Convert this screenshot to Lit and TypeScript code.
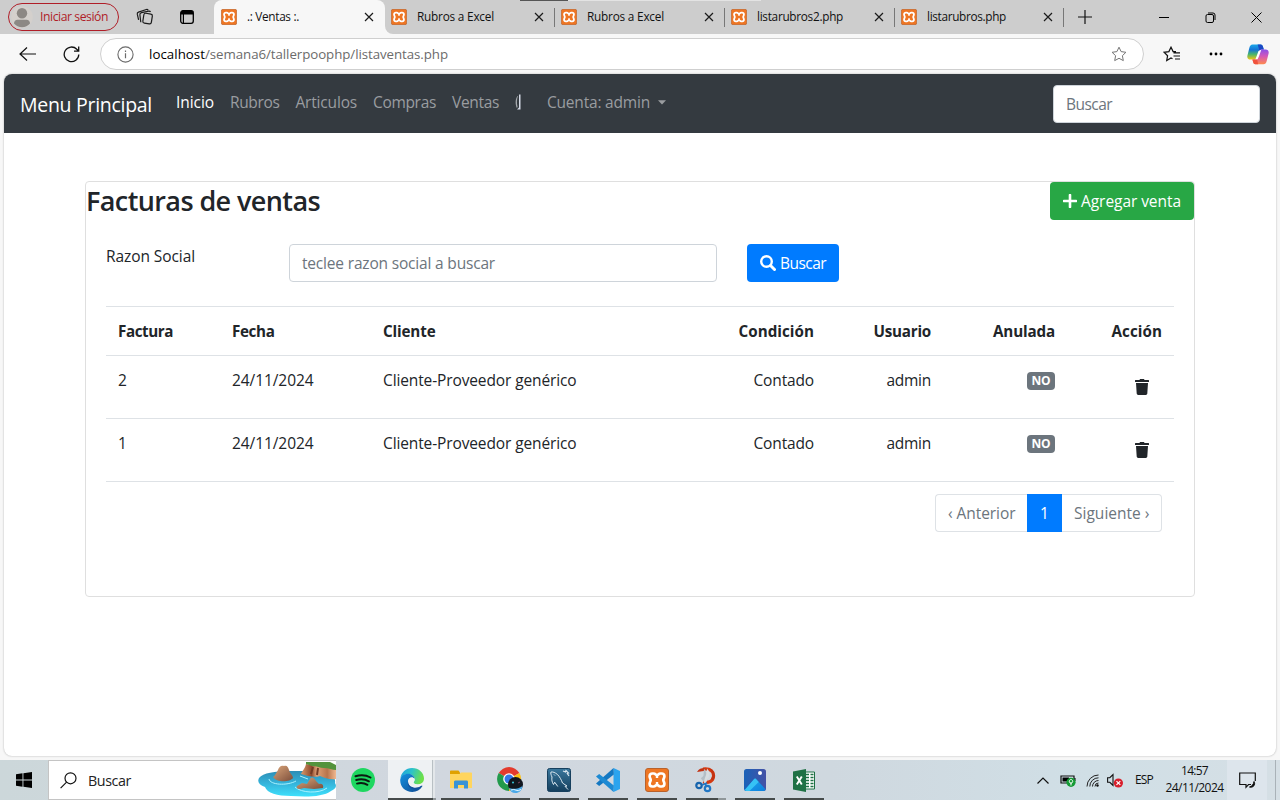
import { LitElement, html, css } from "lit";
import { customElement, property } from "lit/decorators.js";

/** Text run whose tracking is adjusted so that it fills a given width. */
@customElement("fit-text")
class FitText extends LitElement {
  @property({ type: Number }) w = 0;
  @property() text = "";
  static styles = css`
    :host { display: inline-block; white-space: pre; flex: none; }
    .run { display: inline-block; }
  `;
  render() {
    return html`<span class="run">${this.text}</span>`;
  }
  updated() {
    const run = this.renderRoot.querySelector(".run") as HTMLElement;
    run.style.letterSpacing = "0px";
    const natural = run.getBoundingClientRect().width;
    const gap = (this.w - natural) / Math.max(1, this.text.length);
    run.style.letterSpacing = gap.toFixed(3) + "px";
    this.style.width = this.w + "px";
  }
}

const fit = (text: string, w: number) => html`<fit-text .text=${text} .w=${w}></fit-text>`;

const xampp = (size: number) => html`<svg width=${size} height=${size} viewBox="0 0 24 24">
  <rect x="0.5" y="0.5" width="23" height="23" rx="2.5" fill="#ee7623" stroke="#b9622c"/>
  <path d="M7.300 5.500h1.400c1.700 0 2.200 1.700 3.300 1.700s1.600-1.700 3.300-1.700h1.400a2.700 2.700 0 0 1 2.700 2.700c0 1.700-1.100 2.400-1.100 3.800s1.100 2.100 1.100 3.800a2.700 2.700 0 0 1-2.700 2.700h-1.400c-1.700 0-2.200-1.700-3.300-1.700s-1.600 1.700-3.300 1.700H7.300a2.700 2.700 0 0 1-2.700-2.700c0-1.700 1.100-2.400 1.100-3.800s-1.100-2.100-1.100-3.800a2.700 2.700 0 0 1 2.700-2.700z" fill="none" stroke="#fff" stroke-width="2.700"/>
  <path d="M12 7.500v2.600M12 13.900v2.600" stroke="#fff" stroke-width="2.400"/>
</svg>`;

const closeIcon = html`<svg width="10" height="10" viewBox="0 0 10 10"><path d="M1 1l8 8M9 1l-8 8" stroke="#1b1b1b" stroke-width="1.200" fill="none"/></svg>`;

const profileIcon = html`<svg width="22" height="22" viewBox="0 0 22 22">
  <circle cx="11" cy="11" r="10.800" fill="#d4d0cc"/><circle cx="11" cy="7.200" r="5.200" fill="#8c8884"/>
  <path d="M3 17.500c0-2.200 1.500-3.700 3.500-3.700h9c2 0 3.500 1.500 3.500 3.700-2 2.400-4.800 3.800-8 3.800s-6-1.400-8-3.800z" fill="#8c8884"/></svg>`;

const workspacesIcon = html`<svg width="18" height="18" viewBox="0 0 18 18" fill="none" stroke="#1b1b1b" stroke-width="1.200">
  <rect x="7.300" y="5.600" width="8.600" height="10" rx="1.800" transform="rotate(9 11.600 10.600)"/>
  <path d="M4.800 14.300l-.9-7.500c-.1-1.100.5-1.900 1.600-2.200l7.300-1.500c.8-.1 1.400.2 1.700.9"/>
  <path d="M2.600 11.800L1.300 6.200c-.2-1 .3-1.800 1.200-2.100l7.800-2.600c.8-.2 1.500 0 1.900.7"/></svg>`;

const tabActionsIcon = html`<svg width="14" height="14" viewBox="0 0 14 14"><rect x=".7" y=".7" width="12.600" height="12.600" rx="2.200" fill="none" stroke="#000" stroke-width="1.300"/><path d="M.8 4V3A2.200 2.200 0 0 1 3 .8h8A2.200 2.200 0 0 1 13.200 3v1.500H4v8.700H2.800V4.500H.8z" fill="#000"/></svg>`;

const starPath = "M8 1.200l2.100 4.400 4.800.7-3.500 3.400.9 4.900L8 12.300l-4.300 2.300.9-4.900L1.100 6.300l4.800-.7z";

const copilotIcon = html`<svg width="22" height="21" viewBox="0 0 22 21">
  <defs>
    <linearGradient id="ca" x1="0" y1="0" x2="0" y2="1"><stop offset="0" stop-color="#1aa7e8"/><stop offset=".35" stop-color="#1574d6"/><stop offset=".65" stop-color="#49b56d"/><stop offset="1" stop-color="#f0c514"/></linearGradient>
    <linearGradient id="cb" x1="0" y1="0" x2="0" y2="1"><stop offset="0" stop-color="#8b4fe8"/><stop offset=".45" stop-color="#d457b8"/><stop offset="1" stop-color="#ff8a4d"/></linearGradient>
  </defs>
  <path d="M5.500.6h8.200c1.200 0 1.800.9 2.200 2l.9 3h-1.600c-1.300 0-2 .6-2.400 1.800l-2.100 6.400c-.4 1.100-1 1.700-2.200 1.700H3.300C1.200 15.500-.1 14 .4 11.700L2.300 4C2.900 1.800 3.800.6 5.500.6z" fill="url(#ca)"/>
  <path d="M10.600.6h3.100c1.200 0 1.800.9 2.200 2l.9 3h-1.600c-1.300 0-2 .6-2.400 1.800z" fill="#1b48c4"/>
  <path d="M16.500 20.200H8.300c-1.200 0-1.700-.9-2.100-2l-.8-2.700h2c1.300 0 2-.6 2.400-1.800l2-6.200c.4-1.200 1-1.900 2.300-1.900h4.600c2.100 0 3.400 1.500 2.900 3.800l-1.900 7.500c-.6 2.100-1.500 3.300-3.200 3.300z" fill="url(#cb)"/>
  <path d="M11.200 20.200H8.300c-1.200 0-1.700-.9-2.100-2l-.8-2.700h2c1.300 0 2-.6 2.400-1.800z" fill="#f0523d"/>
  <path d="M9.500 12.500l2-5.600 2.800-1.100-2.300 6.500-1.400 3-2.300.2z" fill="#fff"/></svg>`;

const trashIcon = html`<svg width="14" height="16" viewBox="0 0 14 16" fill="#212529"><path d="M0 1.500C0 1.200.2 1 .5 1h3.800L4.800.4c.2-.3.4-.4.7-.4h3c.3 0 .5.100.7.400L9.700 1h3.800c.3 0 .5.200.5.500V3H0z"/><path d="M1 4h12l-.7 10.600c0 .8-.7 1.400-1.500 1.400H3.200c-.8 0-1.400-.6-1.500-1.400z"/></svg>`;

const beach = html`<svg width="78" height="36" viewBox="0 0 78 36">
  <defs>
    <linearGradient id="sea" x1="0" y1="0" x2="0" y2="1"><stop offset="0" stop-color="#2d8db5"/><stop offset=".5" stop-color="#35b5dc"/><stop offset="1" stop-color="#3fe0fb"/></linearGradient>
    <linearGradient id="rk" x1="0" y1="0" x2="1" y2="1"><stop offset="0" stop-color="#dca67a"/><stop offset="1" stop-color="#7c4e3b"/></linearGradient>
    <linearGradient id="cl" x1="0" y1="0" x2="1" y2="0"><stop offset="0" stop-color="#d99a6c"/><stop offset=".3" stop-color="#8f4a2c"/><stop offset=".45" stop-color="#e0a277"/><stop offset=".75" stop-color="#b8744c"/><stop offset="1" stop-color="#f0b890"/></linearGradient>
  </defs>
  <path d="M1 16c4-5 16-7 30-7h35c8 2 12 7 11 12 2 3 1 6-4 8-8 6-24 6-40 5-14 0-24-3-26-9C1 23-1 20 1 16z" fill="url(#sea)"/>
  <path d="M11 17c1 6 18 7 27 2M37 25c6 6 24 7 32 1M42 14l8 3" stroke="#a9f2ff" stroke-width="1" fill="none"/>
  <path d="M15 15c2-1 3-4 5-7 1-3 3-5 6-4 3-1 4 1 5 4 1 4 4 5 4 8-3 4-16 5-20-1z" fill="url(#rk)"/>
  <path d="M48 2l30 5v10c-6 1-11-1-16-3-6 2-12 0-19-2 1-3 4-5 5-10z" fill="url(#cl)"/>
  <path d="M48 0h24l6 3v5c-4 0-7-2-12-2-4 0-7-2-12-2l-6-2z" fill="#54933c"/>
  <path d="M55 5l-2 7M60 6l-1 7" stroke="#733b24" stroke-width="2"/>
  <path d="M39 24l5-3 5 1 3-5c2-3 4-1 6 2l3 3c3-1 5 1 4 4l-9 1-10-1-4 1c-3 0-4-1-3-3z" fill="url(#rk)"/>
</svg>`;

const apps: Record<string, unknown> = {
  spotify: html`<svg width="24" height="24" viewBox="0 0 24 24"><circle cx="12" cy="12" r="12" fill="#1ed760"/><path d="M4.500 8.200c5-1.500 11-1 15 1.300M5.200 12c4.500-1.200 9-.8 12.700 1.300M6 15.600c3.700-.9 7.400-.6 10.400 1.200" fill="none" stroke="#0b1a10" stroke-linecap="round" stroke-width="2"/></svg>`,
  edge: html`<svg width="24" height="24" viewBox="0 0 24 24"><defs>
    <linearGradient id="e1" x1="0" y1="0" x2="1" y2=".3"><stop offset="0" stop-color="#1c9de0"/><stop offset=".5" stop-color="#2cc3c9"/><stop offset="1" stop-color="#6ce04a"/></linearGradient>
    <linearGradient id="e2" x1="0" y1="0" x2="1" y2="1"><stop offset="0" stop-color="#1390df"/><stop offset="1" stop-color="#104a91"/></linearGradient></defs>
    <path d="M.3 11C.9 4.500 6 0 12 0c7 0 12 5 12 10.500 0 3.600-2.700 5.900-6.200 5.900-2.700 0-4.300-1-4.300-1.900 0-.6 1.100-1.200 1.100-3.100C14.600 8.500 12 6 8.500 6 4 6 .8 8.700.3 11z" fill="url(#e1)"/>
    <path d="M.2 12.500C.2 8.500 4 5.800 8.200 5.800c3.700 0 6.400 2.600 6.400 5.200-.6-1-1.600-1.500-2.800-1.500-2.600 0-3.700 2-3.700 4.200 0 3.800 3.600 6 7.400 6 2.400 0 4.300-.9 5.800-2 .8-.4 1.300.2.900.9C20.200 21.900 16.500 24 12.400 24 5.400 24 .2 19 .2 12.500z" fill="url(#e2)"/>
    <path d="M8.100 13.700c0-2.200 1.200-4.200 3.700-4.200 1.300 0 2.300.6 2.800 1.500.1 2.200-1.100 2.900-1.100 3.500 0 .9 1.600 1.900 4.300 1.900 1.500 0 2.800-.4 3.900-1.200l-.4 2.500c-1.500 1.100-3.400 2-5.800 2-3.800 0-7.400-2.200-7.400-6z" fill="#eef1f3"/>
    <path d="M8.100 13.700c0 3.800 3.600 6 7.400 6 2.400 0 4.300-.9 5.800-2l-1 2.300c-3 2-8 2-11-1-1.500-1.500-1.800-3.500-1.200-5.300z" fill="#134f9c"/></svg>`,
  explorer: html`<svg width="22" height="20" viewBox="0 0 22 20"><path d="M0 1.500C0 .8.500.5 1 .5h7.500l1.500 2v4H0z" fill="#e0a100"/><path d="M0 4h9.500L11 2.500h10c.6 0 1 .4 1 1V18H0z" fill="#ffd55e"/><path d="M4 18.500V12c0-1 .6-1.500 1.500-1.500h11c1 0 1.500.6 1.500 1.500v6.500h-4V15H8v3.500z" fill="#3a93d6"/></svg>`,
  chrome: html`<svg width="26" height="26" viewBox="0 0 26 26"><path d="M12 12L1.700 6A12 12 0 0 1 22.400 6z" fill="#e33b2e"/><path d="M12 12L22.400 6A12 12 0 0 1 12 24z" fill="#fbc116"/><path d="M12 12v12A12 12 0 0 1 1.700 6z" fill="#229a4c"/><circle cx="12" cy="12" r="5.800" fill="#fff"/><circle cx="12" cy="12" r="4.500" fill="#3377e8"/><circle cx="18.500" cy="17.500" r="7.500" fill="#11161f"/><path d="M12 21c3 1.500 10 1 13.500-2-.5 4.500-3.500 7-7 7s-5.500-2-6.500-5z" fill="#4aa9e8"/><path d="M14 23q3-1.200 5 .2t5-.8" stroke="#dff3ff" fill="none"/><circle cx="16" cy="15.500" r="1" fill="#38c8df"/><path d="M21 16l2-1" stroke="#7f4464"/></svg>`,
  mysql: html`<svg width="24" height="24" viewBox="0 0 24 24"><defs><linearGradient id="my" x1="0" y1="0" x2="0" y2="1"><stop offset="0" stop-color="#39779d"/><stop offset="1" stop-color="#143e5c"/></linearGradient></defs><rect x=".5" y=".5" width="23" height="23" rx="2" fill="url(#my)" stroke="#17405e"/><path d="M6.500 16.500C5 14 4.500 12 5 9 4 7 3.500 5 4 4c2-.3 4 .5 6.500 2.500 2 2 4 5.500 5 8.500l4.500 3-2 .3 3 3.200M6.500 16.500l1.200-2.300 3.100 4.300M7 6.500l1 1" fill="none" stroke="#dce8f0" stroke-width="1"/><path d="M16 3l2.500 1 .5-1.500L21.500 5l-1.200.5L22 8" fill="none" stroke="#dce8f0" stroke-width="1.200"/></svg>`,
  vscode: html`<svg width="24" height="24" viewBox="0 0 24 24"><path d="M17.500 0L24 3v18l-6.500 3z" fill="#2ba4ee"/><path d="M17.500 0l.3 6.500L3.200 18 0 15.600z" fill="#1478c2"/><path d="M0 8.400L3.200 6l14.600 11.500-.3 6.500z" fill="#1d8ad3"/></svg>`,
  xampp: xampp(24),
  snip: html`<svg width="22" height="26" viewBox="0 0 22 26"><path d="M8 2c8-1 11 3 10.500 7.500C18 14 14 16.500 8 15" fill="none" stroke="#d43a12" stroke-width="3.200"/><path d="M2 5C4 1.500 7 .8 10 1l-1 3C6 4 4.500 5 2 5zM14 1c5.500 2 7.500 8 4 12.500l-2-1.500c2.500-3.500 2-7-2-11z" fill="#c23212"/><path d="M9 1.500c2 3 4 7 3.500 11l-2.500 4-4-5c0-1.500 2-1 2.500-3z" fill="#b4bec6"/><path d="M12 1.500c3 3 3 6 1 10l-3 6-1-3c1-5 3-7 3-13z" fill="#d8dde1"/><circle cx="4" cy="18.500" r="2.700" fill="none" stroke="#1764ad" stroke-width="2.200"/><circle cx="12.500" cy="21.500" r="2.700" fill="none" stroke="#2176c4" stroke-width="2.200"/><path d="M7 18l5-2M11 19l-.5-3" stroke="#2176c4" stroke-width="1.800"/></svg>`,
  photos: html`<svg width="24" height="24" viewBox="0 0 24 24"><defs><linearGradient id="ph" x1="0" y1="0" x2="1" y2="1"><stop offset="0" stop-color="#20a9ee"/><stop offset="1" stop-color="#0d80dd"/></linearGradient><linearGradient id="pg" x1="0" y1="0" x2="1" y2="0"><stop offset="0" stop-color="#1a62b8"/><stop offset="1" stop-color="#4552a6"/></linearGradient></defs><rect x="1" y="1" width="22" height="22" rx="2.500" fill="url(#pg)"/><path d="M1.700 22L11 11.200c.7-.8 1.500-.8 2.200 0L22.300 21c.5 1.100-.7 2-2 2H3.500c-.8 0-1.400-.3-1.800-1z" fill="url(#ph)"/><path d="M1.700 22L11 11.200c.7-.8 1.500-.8 2.200 0l2.500 2.800L6.500 23h-3z" fill="#36c3f5"/><circle cx="17" cy="5" r="2" fill="#fff"/></svg>`,
  excel: html`<svg width="22" height="23" viewBox="0 0 22 23"><path d="M11 3h10.500v17H11z" fill="#fff" stroke="#1f7145"/><path d="M13 5.500h3M17.500 5.500h3M13 8.500h3M17.500 8.500h3M13 11.500h3M17.500 11.500h3M13 14.500h3M17.500 14.500h3M13 17.500h3M17.500 17.500h3" stroke="#1f7145" stroke-width="1.700"/><path d="M0 2.500L13 0v23L0 20.500z" fill="#1f7145"/><path d="M3.800 7.500l5 8M8.800 7.500l-5 8" stroke="#fff" stroke-width="1.900"/></svg>`,
};

@customElement("browser-chrome")
class BrowserChrome extends LitElement {
  static styles = css`
    :host { display: block; font-family: "Open Sans", "Noto Sans", sans-serif; color: #111; }
    svg { display: block; flex: none; }
    .strip { height: 34px; background: #cdcdcd; display: flex; box-sizing: border-box; position: relative; }
    .marks { position: absolute; z-index: 1; left: 520px; top: 0; width: 241px; height: 1px; background: linear-gradient(90deg, #555 48px, #e3e3e3 48px); }
    .left { width: 214px; display: flex; align-items: center; box-sizing: border-box; padding-left: 8px; border-radius: 0 0 8px 0; background: #cdcdcd; }
    .profile { width: 111px; height: 28px; border: 1.300px solid #b01e28; border-radius: 14px; box-sizing: border-box; display: flex; align-items: center; gap: 7px; padding-left: 2px; color: #b01e28; font-size: 12.200px; }
    .profile fit-text { margin-bottom: 1px; }
    .ws { margin-left: 17px; }
    .ta { margin-left: 26px; }
    .tabs { display: flex; background: linear-gradient(#cdcdcd 12px, #f7f7f7 12px); }
    .tab { width: 170px; height: 34px; box-sizing: border-box; display: flex; align-items: center; padding: 0 11px 0 6px; background: #cdcdcd; font-size: 11.800px; line-height: 16px; position: relative; }
    .tab.first { border-radius: 0 0 0 8px; }
    .tab.active { width: 171px; padding-left: 7px; background: #f7f7f7; border-radius: 8px 8px 0 0; }
    .tab .name { margin: 0 0 2px 10px; flex: 1; display: flex; }
    .tab.sep::after { content: ""; position: absolute; right: 0; top: 8px; width: 1px; height: 19px; background: #777; }
    .tab.last { width: 169px; }
    .cap { flex: 1; display: flex; align-items: center; background: #cdcdcd; }
    .plus { margin-left: 14px; } .min { margin-left: 67px; } .max { margin-left: 36px; } .x { margin-left: 35px; }
    .bar { height: 40px; background: #f7f7f7; display: flex; align-items: center; }
    .back { margin-left: 19px; } .reload { margin-left: 27px; }
    .address { margin-left: 20px; width: 1044px; height: 32px; box-sizing: border-box; border: 1px solid #cfcfcf; border-radius: 16px; background: #fff; display: flex; align-items: center; padding: 0 16px; font-size: 13.300px; }
    .url { margin-left: 15px; flex: 1; display: flex; color: #6b6b6b; }
    .host { color: #000; }
    .fav { margin-left: 19px; } .dots { margin-left: 29px; } .cop { margin-left: 24px; }
  `;
  private tabs: [string, number, string][] = [
    [".: Ventas :.", 52, "active"], ["Rubros a Excel", 77, "first sep"], ["Rubros a Excel", 77, "sep"], ["listarubros2.php", 86, "sep"], ["listarubros.php", 79, "sep last"],
  ];
  render() {
    return html`
      <div class="strip">
        <div class="marks"></div>
        <div class="left">
          <div class="profile">${profileIcon}${fit("Iniciar sesión", 68)}</div>
          <div class="ws">${workspacesIcon}</div><div class="ta">${tabActionsIcon}</div>
        </div>
        <div class="tabs">${this.tabs.map(([n, w, c]) => html`<div class="tab ${c}">${xampp(16)}<span class="name">${fit(n, w)}</span>${closeIcon}</div>`)}</div>
        <div class="cap">
          <svg class="plus" width="14" height="14" viewBox="0 0 14 14"><path d="M7 0v14M0 7h14" stroke="#111" stroke-width="1.200"/></svg>
          <svg class="min" width="10" height="10" viewBox="0 0 10 10"><path d="M0 5.500h10" stroke="#000"/></svg>
          <svg class="max" width="11" height="11" viewBox="0 0 11 11" fill="none" stroke="#000"><rect x="1" y="2.500" width="7.500" height="8" rx="1.500"/><path d="M3 1h5a2 2 0 0 1 2 2v5"/></svg>
          <svg class="x" width="11" height="11" viewBox="0 0 11 11"><path d="M.5.5l10 10M10.500.5l-10 10" stroke="#000"/></svg>
        </div>
      </div>
      <div class="bar">
        <svg class="back" width="17" height="14" viewBox="0 0 17 14" fill="none" stroke="#111" stroke-width="1.200"><path d="M8 .5L1 7l7 6.500M1 7h16"/></svg>
        <svg class="reload" width="17" height="17" viewBox="0 0 17 17" fill="none" stroke="#111" stroke-width="1.300"><path d="M15.800 8.500a7.300 7.300 0 1 1-2-5.200L15.500 5M15.700.5V5.200H11"/></svg>
        <div class="address">
          <svg width="17" height="17" viewBox="0 0 17 17"><circle cx="8.500" cy="8.500" r="7.600" fill="none" stroke="#6b6b6b" stroke-width="1.100"/><path d="M8.500 7.200v5M8.500 4.500v1.400" stroke="#6b6b6b" stroke-width="1.200"/></svg>
          <div class="url"><span class="host">${fit("localhost", 56)}</span>${fit("/semana6/tallerpoophp/listaventas.php", 243)}</div>
          <svg width="16" height="16" viewBox="0 0 16 16"><path d=${starPath} fill="none" stroke="#757575" stroke-width="1"/></svg>
        </div>
        <svg class="fav" width="17" height="16" viewBox="0 0 17 16" fill="none" stroke="#111" stroke-width="1.200"><path d="M9.500 12.800L8 12l-4.300 2.600.9-4.900L1.100 6.300l4.800-.7L8 1.200l2.100 4.400H13M10.500 6.800H17M10.500 10H17M12 13h5"/></svg>
        <svg class="dots" width="14" height="4" viewBox="0 0 14 4"><circle cx="2" cy="2" r="1.400"/><circle cx="7" cy="2" r="1.400"/><circle cx="12" cy="2" r="1.400"/></svg>
        <div class="cop">${copilotIcon}</div>
      </div>`;
  }
}

@customElement("sales-page")
class SalesPage extends LitElement {
  static styles = css`
    :host { display: block; height: 682px; margin: 0 4px; background: #fff; border-radius: 8px; overflow: hidden; box-shadow: 0 0 2px #aaa; font-family: "Open Sans", "Noto Sans", sans-serif; font-size: 15.500px; line-height: 24px; color: #212529; }
    svg { display: block; flex: none; }
    nav { height: 59px; background: #343a40; display: flex; align-items: center; padding: 0 16px; box-sizing: border-box; color: #9a9da0; }
    .brand { font-size: 19.500px; color: #fff; margin: 3px 24px 0 0; }
    .links { display: flex; align-items: center; gap: 16px; flex: 1; margin-bottom: 3px; }
    .on { color: #fff; }
    .moon { margin-right: 10px; }
    .user { display: flex; align-items: center; gap: 8px; }
    .field { box-sizing: border-box; height: 38px; border: 1px solid #ced4da; border-radius: 4px; background: #fff; padding: 6px 12px; color: #6c757d; display: flex; align-items: center; }
    .search { width: 207px; margin-top: 1px; }
    .card { margin: 48px 81px 0; height: 416px; box-sizing: border-box; border: 1px solid #dfdfdf; border-radius: 4px; }
    .head { display: flex; justify-content: space-between; height: 38px; }
    h3 { margin: 0; font-size: 27px; font-weight: 600; line-height: 37px; }
    .btn { box-sizing: border-box; height: 38px; border-radius: 4px; color: #fff; display: flex; align-items: center; }
    .green { background: #28a745; width: 144px; gap: 4px; padding-left: 13px; }
    .blue { background: #007bff; width: 92px; margin-left: 30px; gap: 4px; padding-left: 13px; }
    .body { padding: 24px 20px 0; }
    .filter { display: flex; height: 38px; margin-bottom: 24px; }
    .filter .lab { width: 183px; }
    .filter .field { width: 428px; }
    .row { display: grid; grid-template-columns: 114px 151px 300px 155px 117px 124px 107px; border-top: 1px solid #dee2e6; height: 63px; box-sizing: border-box; padding-top: 12px; }
    .row > div { padding: 0 12px; height: 24px; }
    .row > div:nth-child(n + 4) { display: flex; justify-content: flex-end; }
    .hd { height: 49px; font-weight: 700; font-size: 15.200px; }
    .badge { background: #6c757d; color: #fff; font-size: 12px; font-weight: 700; line-height: 18px; height: 18px; border-radius: 4px; width: 28px; box-sizing: border-box; padding-left: 4.500px; margin-top: 4px; }
    .trash { margin: 11px 13px 0 0; }
    .end { border-top: 1px solid #dee2e6; padding: 12px 12px 0; display: flex; justify-content: flex-end; }
    .pg { box-sizing: border-box; height: 38px; border: 1px solid #dee2e6; color: #6c757d; display: flex; align-items: center; padding-left: 12px; }
    .prev { width: 92px; border-right: 0; border-radius: 4px 0 0 4px; }
    .cur { width: 35px; background: #007bff; border-color: #007bff; color: #fff; }
    .next { width: 100px; border-left: 0; border-radius: 0 4px 4px 0; }
  `;
  private rows = ["2", "1"];
  render() {
    return html`
      <nav>
        <div class="brand">${fit("Menu Principal", 132)}</div>
        <div class="links">
          <span class="on">${fit("Inicio", 38)}</span>${fit("Rubros", 49.500)}${fit("Articulos", 61.500)}${fit("Compras", 63)}${fit("Ventas", 47)}
          <svg class="moon" width="6" height="16" viewBox="0 0 6 16"><path d="M4 0.500h1.500v15H2l2-2z" fill="#d5dae6"/><path d="M2.500 2C.2 5 .2 10 1.800 14l.8-1C1.600 9 1.800 5 3 2z" fill="#a4a8ac"/></svg>
          <span class="user">${fit("Cuenta: admin", 103)}<svg width="8" height="5" viewBox="0 0 8 5"><path d="M0 .3h8L4 4.500z" fill="#9a9da0"/></svg></span>
        </div>
        <div class="field search">${fit("Buscar", 46)}</div>
      </nav>
      <div class="card">
        <div class="head">
          <h3>${fit("Facturas de ventas", 234)}</h3>
          <div class="btn green"><svg width="14" height="14" viewBox="0 0 14 14"><path d="M7 1v12M1 7h12" stroke="#fff" stroke-width="2.600" stroke-linecap="round"/></svg>${fit("Agregar venta", 100)}</div>
        </div>
        <div class="body">
          <div class="filter">
            <div class="lab">${fit("Razon Social", 89)}</div>
            <div class="field">${fit("teclee razon social a buscar", 193)}</div>
            <div class="btn blue"><svg width="16" height="16" viewBox="0 0 16 16" fill="none" stroke="#fff"><circle cx="6.500" cy="6.500" r="5.300" stroke-width="2.400"/><path d="M10.500 10.500l4 4" stroke-width="3" stroke-linecap="round"/></svg>${fit("Buscar", 46)}</div>
          </div>
          <div class="row hd">
            <div>${fit("Factura", 55)}</div><div>${fit("Fecha", 42.500)}</div><div>${fit("Cliente", 52.500)}</div><div>${fit("Condición", 75.500)}</div><div>${fit("Usuario", 57.500)}</div><div>${fit("Anulada", 62)}</div><div>${fit("Acción", 50.500)}</div>
          </div>
          ${this.rows.map((n) => html`<div class="row">
            <div>${fit(n, 9)}</div><div>${fit("24/11/2024", 81.500)}</div><div>${fit("Cliente-Proveedor genérico", 193.500)}</div><div>${fit("Contado", 60.500)}</div><div>${fit("admin", 44.500)}</div>
            <div><span class="badge">${fit("NO", 19)}</span></div><div><span class="trash">${trashIcon}</span></div>
          </div>`)}
          <div class="end">
            <div class="pg prev">${fit("‹ Anterior", 67.500)}</div><div class="pg cur">${fit("1", 9)}</div><div class="pg next">${fit("Siguiente ›", 75.500)}</div>
          </div>
        </div>
      </div>`;
  }
}

@customElement("task-bar")
class TaskBar extends LitElement {
  static styles = css`
    :host { display: flex; height: 40px; background: linear-gradient(90deg, #ccd7da, #d1d7df 35%, #cfd8df 65%, #d0dfe6 85%, #d5dfe5); font-family: "Open Sans", "Noto Sans", sans-serif; color: #111; }
    svg { display: block; flex: none; }
    .start { width: 48px; display: flex; align-items: center; justify-content: center; }
    .find { width: 288px; box-sizing: border-box; border: 1px solid #c4c4c4; border-right: 0; background: #fff; display: flex; align-items: center; padding-left: 11px; font-size: 14.300px; color: #222; overflow: hidden; }
    .find .lab { margin-left: 11px; flex: 1; }
    .apps { display: flex; padding-left: 3px; flex: 1; }
    .app { width: 49px; box-sizing: border-box; display: flex; align-items: center; justify-content: center; position: relative; padding-right: 1px; }
    .run::after { content: ""; position: absolute; left: 4px; right: 5px; bottom: 0; height: 2px; background: #464b4b; }
    .app.focus { background: linear-gradient(90deg, #eef1f3 44px, #b9c0c4 44px, #b9c0c4 45px, #e3e7ea 45px, #e3e7ea 47px, transparent 47px); }
    .app.focus::after { left: 0; right: 1px; background: linear-gradient(90deg, #464b4b 45px, #8f9699 45px); }
    .app.snip::after { background: linear-gradient(90deg, #464b4b 32px, #8f9699 32px); }
    .tray { display: flex; align-items: center; }
    .bat { margin-left: 11px; } .wifi { margin-left: 10px; } .vol { margin-left: 8px; }
    .lang { margin: 0 0 2px 12px; font-size: 12px; }
    .clock { width: 59px; margin: 0 0 2px 12px; font-size: 12px; display: flex; flex-direction: column; align-items: center; line-height: 17.500px; }
    .note { width: 40px; margin-left: 3px; height: 40px; background: #dde5ec; display: flex; align-items: center; justify-content: center; }
    .desk { width: 4px; height: 40px; margin-left: 8px; border-left: 1px solid #a9b2b8; }
  `;
  render() {
    return html`
      <div class="start"><svg width="16" height="16" viewBox="0 0 16 16"><path d="M0 2.200L6.500 1.300v6.200H0zM7.400 1.200L16 0v7.500H7.400zM0 8.500h6.500v6.200L0 13.800zM7.400 8.500H16V16l-8.600-1.200z"/></svg></div>
      <div class="find">
        <svg width="17" height="17" viewBox="0 0 17 17" fill="none" stroke="#111" stroke-width="1.200"><circle cx="10.500" cy="6.300" r="5.500"/><path d="M6.600 10.200L.6 16.200"/></svg>
        <div class="lab">${fit("Buscar", 43)}</div>${beach}
      </div>
      <div class="apps">${Object.keys(apps).map((k) => html`<div class="app ${k === "spotify" ? "" : "run"} ${k === "edge" ? "focus" : k}">${apps[k]}</div>`)}</div>
      <div class="tray">
        <svg width="12" height="7" viewBox="0 0 12 7"><path d="M.5 6.500L6 1l5.500 5.500" fill="none" stroke="#111" stroke-width="1.200"/></svg>
        <svg class="bat" width="16" height="14" viewBox="0 0 16 14"><path d="M1 3h13v7H1z" fill="none" stroke="#111" stroke-width="1.200"/><path d="M2.500 4.500H9v4H2.500z"/><path d="M14.500 5h1v3h-1z"/><circle cx="11" cy="9.300" r="4.600" fill="#159b35"/><path d="M11 12.500V9M9.300 8.500C9.300 7 11 6.300 11 6.300s1.700.7 1.700 2.200-1.700 1.800-1.700 1.800-1.700-.3-1.700-1.800z" fill="none" stroke="#fff"/></svg>
        <svg class="wifi" width="13" height="13" viewBox="0 0 13 13" fill="none" stroke="#222"><path d="M1 12.500A11.500 11.500 0 0 1 12.500 1M3.800 12.500a8.700 8.700 0 0 1 8.700-8.700M6.500 12.500a6 6 0 0 1 6-6M9 12.500A3.500 3.500 0 0 1 12.500 9"/><circle cx="11.500" cy="11.500" r="1.200" fill="#111" stroke="none"/></svg>
        <svg class="vol" width="16" height="15" viewBox="0 0 16 15"><path d="M.6 4.700h2.200L6 1.500v11L2.800 9.300H.6z" fill="none" stroke="#111" stroke-width="1.100"/><circle cx="11.400" cy="10" r="4.600" fill="#d81f2c"/><path d="M9.500 8.100l3.800 3.800M13.300 8.100l-3.800 3.800" stroke="#fff" stroke-width="1.200"/></svg>
        <div class="lang">${fit("ESP", 18)}</div>
        <div class="clock">${fit("14:57", 27)}${fit("24/11/2024", 58)}</div>
        <div class="note"><svg width="17" height="17" viewBox="0 0 17 17"><path d="M12 12.500H9.500L7 15.300V12.500H.7V1h15.600v8" fill="none" stroke="#111" stroke-width="1.200"/><path d="M15 9.500c1.800 3-.5 6.500-4.500 5.500 2.500-.7 4-2.500 4.500-5.500z" stroke="#111"/></svg></div>
        <div class="desk"></div>
      </div>`;
  }
}

@customElement("app-root")
class AppRoot extends LitElement {
  static styles = css`
    :host { display: block; width: 1280px; height: 800px; overflow: hidden; background: #f7f7f7; }
    .task { margin-top: 4px; }
  `;
  render() {
    return html`<browser-chrome></browser-chrome><sales-page></sales-page><task-bar class="task"></task-bar>`;
  }
}
